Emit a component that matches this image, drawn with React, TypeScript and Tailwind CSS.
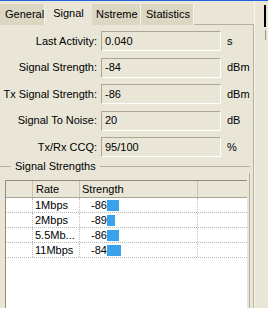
import React from "react";

const LINE = "bg-[#b5b19d]";

function Field({ label, value, unit }: { label: string; value: string; unit: string }) {
  return (
    <div className="flex items-center h-[20px]">
      <div className="w-[97px] text-right whitespace-nowrap">{label}</div>
      <div className="ml-[4px] w-[120px] h-[20px] border border-t-[#aaa692] border-l-[#aaa692] border-b-white border-r-white flex items-center pl-[3px]">
        {value}
      </div>
      <div className="ml-[6px] whitespace-nowrap">{unit}</div>
    </div>
  );
}

const rows = [
  { rate: "1Mbps", s: "-86", w: 12 },
  { rate: "2Mbps", s: "-89", w: 8 },
  { rate: "5.5Mb...", s: "-86", w: 12 },
  { rate: "11Mbps", s: "-84", w: 14 },
];

export default function App() {
  return (
    <div
      className="w-[268px] h-[322px] bg-white overflow-hidden text-[11px] leading-[13px] text-black"
      style={{ fontFamily: '"Liberation Sans", Arial, sans-serif' }}
    >
      <div className="h-px bg-[#1f5fe0]" />
      <div className="h-[307px] flex bg-[#e9e6d7]">
        {/* main tab control */}
        <div className="w-[254px] flex flex-col">
          {/* tab row */}
          <div className="h-[24px] flex items-end">
            <div className="w-[45px] h-[21px] bg-[#dbd7c2] border-r border-[#f4f2ea] flex items-center pl-[5px]">General</div>
            <div className="w-[47px] h-[24px] bg-[#e9e6d7] flex items-center justify-center pt-[1px]">Signal</div>
            <div className="w-[49px] h-[21px] bg-[#dbd7c2] border-r border-[#f4f2ea] flex items-center pl-[4px]">Nstreme</div>
            <div className="w-[53px] h-[21px] bg-[#dbd7c2] border-r border-[#f4f2ea] flex items-center pl-[5px]">Statistics</div>
            <div className="flex-1 h-full border-b border-[#b5b19d]" />
          </div>
          {/* panel */}
          <div className="flex-1 border-r border-[#b5b19d] flex flex-col pt-[6px] min-h-0">
            <div className="flex flex-col gap-[6.5px]">
              <Field label="Last Activity:" value="0.040" unit="s" />
              <Field label="Signal Strength:" value="-84" unit="dBm" />
              <Field label="Tx Signal Strength:" value="-86" unit="dBm" />
              <Field label="Signal To Noise:" value="20" unit="dB" />
              <Field label="Tx/Rx CCQ:" value="95/100" unit="%" />
            </div>
            {/* group box */}
            <div className="mt-[3px] w-[250px] flex-1 flex flex-col min-h-0">
              <div className="h-[13px] flex items-center">
                <div className={`w-[11px] h-px ${LINE}`} />
                <span className="px-[4px] whitespace-nowrap">Signal Strengths</span>
                <div className={`flex-1 h-px ${LINE}`} />
              </div>
              <div className="flex-1 border-r border-[#b5b19d] pt-[7px] pl-[5px] pr-[2px] flex flex-col min-h-0">
                <div className="flex-1 bg-white border-l border-t border-[#8f8c7e] flex flex-col">
                  <div className="h-[17px] flex bg-[#e9e6d7] border-b border-[#a8a494]">
                    <div className="w-[27px] border-r border-[#c9c5b3]" />
                    <div className="w-[47px] border-r border-[#c9c5b3] flex items-center pl-[3px]">Rate</div>
                    <div className="w-[118px] border-r border-[#c9c5b3] flex items-center pl-[2px]">Strength</div>
                    <div className="flex-1" />
                  </div>
                  {rows.map((r) => (
                    <div key={r.rate} className="h-[15px] flex border-b border-dotted border-[#b8b8b8]">
                      <div className="w-[27px] border-r border-dotted border-[#c0c0c0]" />
                      <div className="w-[47px] border-r border-dotted border-[#c0c0c0] flex items-center pl-[2px] whitespace-nowrap">{r.rate}</div>
                      <div className="w-[118px] border-r border-dotted border-[#c0c0c0] flex items-center">
                        <span className="w-[27px] text-right">{r.s}</span>
                        <div className="h-[11px] bg-[#3aa2ec]" style={{ width: r.w }} />
                      </div>
                      <div className="flex-1" />
                    </div>
                  ))}
                </div>
              </div>
            </div>
          </div>
        </div>
        {/* right strip */}
        <div className="flex-1 border-l border-[#f6f4ec] flex flex-col pt-[4px] pl-[9px]">
          <div className="w-[2px] h-[22px] bg-black" />
          <div className="mt-[3px] ml-[1px] w-px h-[10px] bg-[#9a978a]" />
        </div>
      </div>
    </div>
  );
}
